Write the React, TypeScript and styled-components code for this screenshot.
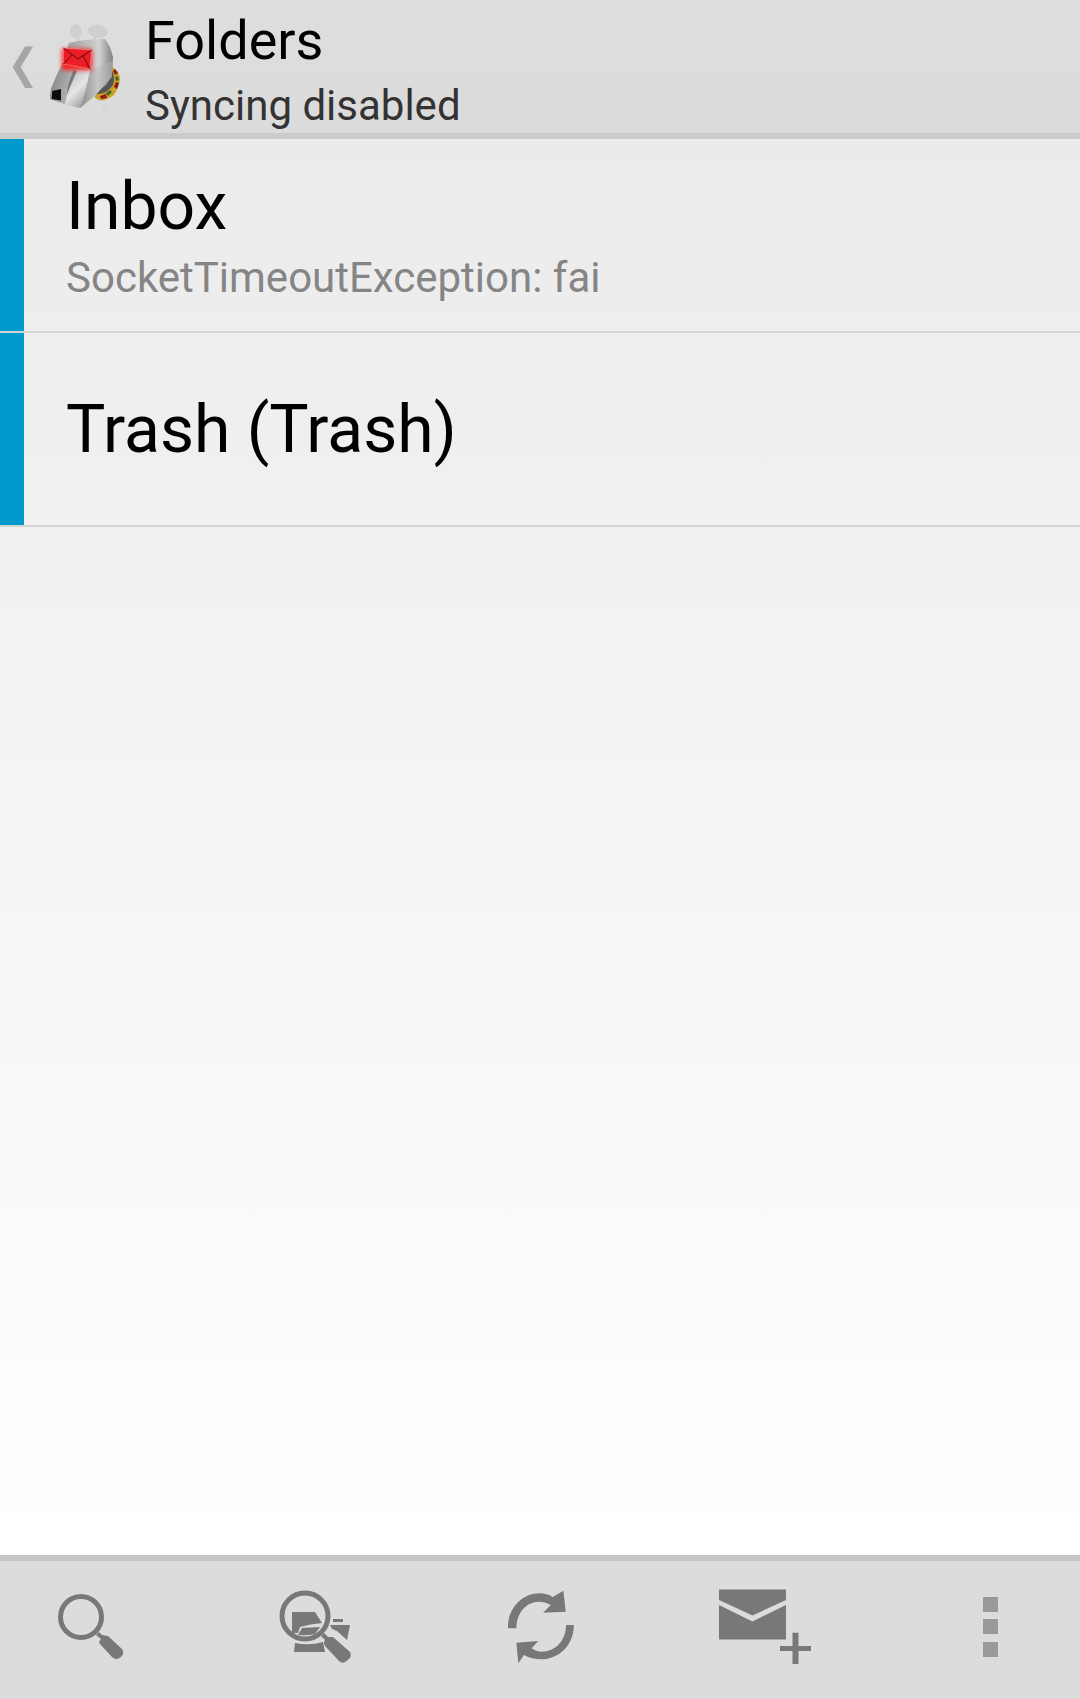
import React from 'react'
import styled, { createGlobalStyle } from 'styled-components'

const GlobalStyle = createGlobalStyle`
  html, body {
    margin: 0;
    padding: 0;
  }
  body {
    font-family: Roboto, 'Liberation Sans', sans-serif;
  }
`

const Screen = styled.div`
  width: 1080px;
  height: 1699px;
  display: flex;
  flex-direction: column;
  overflow: hidden;
`

const ActionBar = styled.header`
  height: 133px;
  flex: none;
  display: flex;
  align-items: center;
  background: linear-gradient(180deg, #dedede, #dbdbdb);
  border-bottom: 6px solid #cbcbcb;
`

const BackChevron = styled.svg`
  width: 24px;
  height: 44px;
  margin-left: 12px;
  flex: none;
`

const Logo = styled.svg`
  width: 80px;
  height: 112px;
  margin-left: 9px;
  flex: none;
`

const TitleBlock = styled.div`
  margin-left: 20px;
  padding-top: 6px;
  display: flex;
  flex-direction: column;
`

const Title = styled.div`
  font-size: 54px;
  line-height: 64px;
  color: #000;
`

const Subtitle = styled.div`
  font-size: 42px;
  line-height: 50px;
  margin-top: 8px;
  color: #333;
`

const Content = styled.main`
  flex: 1;
  min-height: 0;
  background: linear-gradient(180deg, #ebebeb, #ffffff);
`

const FolderRow = styled.div`
  height: 192px;
  display: flex;
  border-bottom: 2px solid #d4d4d4;
`

const ColorChip = styled.div<{ $color: string }>`
  width: 24px;
  flex: none;
  background: ${props => props.$color};
`

const FolderText = styled.div`
  margin-left: 42px;
  padding-top: 2px;
  display: flex;
  flex-direction: column;
  justify-content: center;
`

const FolderName = styled.div`
  font-size: 66px;
  line-height: 76px;
  color: #000;
`

const FolderStatus = styled.div`
  font-size: 42px;
  line-height: 50px;
  margin-top: 8px;
  color: #858585;
`

const BottomBar = styled.footer`
  height: 138px;
  flex: none;
  display: flex;
  background: #dcdcdc;
  border-top: 6px solid #c6c6c6;
`

const BarButton = styled.div`
  flex: 1;
  display: flex;
  align-items: center;
  justify-content: center;
`

const BarIcon = styled.svg`
  width: 100px;
  height: 100px;
  display: block;
  overflow: visible;
`

const SearchIcon = () => (
  <BarIcon viewBox="0 0 100 100">
    <circle cx="23" cy="37" r="20.5" fill="none" stroke="#787878" strokeWidth="5" />
    <path d="M38 55 L41 52 L44 55 L50 56 L64 69 Q67 73 63 77 Q58 81 54 77 L42 64 Q40 62 43 59 Z" fill="#787878" />
  </BarIcon>
)

const FolderSearchIcon = () => (
  <BarIcon viewBox="0 0 100 100">
    <path d="M18 32 H41 L48 43 Q36 44 26 47 L24 53 H18 Z" fill="#787878" />
    <path d="M28 48 L46 47 L41 54 Q33 56 24 55 Z" fill="#787878" />
    <path d="M21 63 Q36 66 49 62 L51 72 H20 Z" fill="#787878" />
    <path d="M59 39 H69 V42 H59 Z M56 45 H76 L73 60 L63 51 L58 49 Z" fill="#787878" />
    <circle cx="31" cy="36" r="23" fill="none" stroke="#787878" strokeWidth="5" />
    <path d="M47 56 L50 53 L54 57 L59 57 L76 72 Q78 76 75 79 L71 82 Q68 84 65 81 L51 66 Q49 63 51 60 Z" fill="#787878" />
  </BarIcon>
)

const SyncIcon = () => (
  <BarIcon viewBox="0 0 100 100">
    <path d="M18 48.3 C17 28 33 13.3 49.3 13.3 Q57 13.3 62.7 17 L73.4 10.7 L75.7 31.7 L53.1 32.7 L60.8 25 Q55 21.7 49.3 21.7 C36 21.7 26.4 33 26.4 48.3 Z" fill="#787878" />
    <path d="M83.8 45 C84 65 69 79.3 51.2 79.3 Q42 79.3 34 75 L28.3 83.3 L26.4 62.7 L48.2 61 L41.7 68.3 Q46 71.7 51.2 71.7 C66 71.7 76.1 60 76.1 45 Z" fill="#787878" />
  </BarIcon>
)

const ComposeIcon = () => (
  <BarIcon viewBox="0 0 100 100">
    <path d="M13 9.5 H80 V20 L46.5 35.5 L13 20 Z" fill="#787878" />
    <path d="M13 25 L46.5 41.5 L80 25 V59.5 H13 Z" fill="#787878" />
    <path d="M74 66 H105 V71 H74 Z M86.5 52.7 H92.5 V84 H86.5 Z" fill="#787878" />
  </BarIcon>
)

const OverflowIcon = () => (
  <BarIcon viewBox="0 0 100 100">
    <path d="M61 17 H76 V32 H61 Z M61 39 H76 V54 H61 Z M61 62 H76 V77 H61 Z" fill="#999" />
  </BarIcon>
)

const K9Logo = () => (
  <Logo viewBox="0 0 80 112">
    <defs>
      <linearGradient id="k9-head" x1="0" y1="0" x2="1" y2="0">
        <stop offset="0%" stopColor="#8a8a8a" />
        <stop offset="50%" stopColor="#b4b4b4" />
        <stop offset="78%" stopColor="#d2d2d2" />
        <stop offset="100%" stopColor="#808080" />
      </linearGradient>
      <linearGradient id="k9-snout" x1="0" y1="0" x2="1" y2="0.4">
        <stop offset="0%" stopColor="#7e7e7e" />
        <stop offset="100%" stopColor="#b8b8b8" />
      </linearGradient>
      <linearGradient id="k9-muzzle" x1="0" y1="0" x2="0.6" y2="1">
        <stop offset="0%" stopColor="#b0b0b0" />
        <stop offset="60%" stopColor="#e6e6e6" />
        <stop offset="100%" stopColor="#a4a4a4" />
      </linearGradient>
      <linearGradient id="k9-cheek" x1="0" y1="0" x2="1" y2="0">
        <stop offset="0%" stopColor="#8c8c8c" />
        <stop offset="55%" stopColor="#c6c6c6" />
        <stop offset="100%" stopColor="#9c9c9c" />
      </linearGradient>
      <filter id="k9-glow" x="-30%" y="-30%" width="160%" height="160%">
        <feGaussianBlur stdDeviation="2.2" />
      </filter>
    </defs>
    <path d="M33 26 L34 36 M50 25 L48 34" stroke="#c8c8c8" strokeWidth="1.6" fill="none" />
    <ellipse cx="30.7" cy="20" rx="6" ry="7" fill="#cfcfcf" />
    <ellipse cx="52.7" cy="20.5" rx="10" ry="6.5" fill="#cfcfcf" transform="rotate(10 52.7 20.5)" />
    <ellipse cx="60" cy="96" rx="3" ry="4" fill="#d8d8d8" />
    <path d="M65 54.5 Q75 60 75 68 Q74 78 68.3 84.5 Q62 89 56.7 89.5 Q51 89 49 84.5 L60 64 Z" fill="#c9a227" />
    <path d="M70 58 L73 62 L70 64 L68 60 Z M74 72 L72 78 L69 76 L71 71 Z M62 87 L56 88 L55 85 L61 83 Z" fill="#8c1c1c" />
    <path d="M73 65 L74 69 L71 70 L70 66 Z M67 81 L63 85 L61 82 L65 79 Z" fill="#3d6b2f" />
    <path d="M66 58 Q71 66 68 74 Q62 83 52 83 L44 76 L60 58 Z" fill="#565656" />
    <path d="M64 66 Q64 72 60 75 Q55 79 49 79 L46 74 L58 62 Z" fill="#8f8f8f" />
    <path d="M24 32 Q40 28 60 28 L65 36 L68 46 L66.7 66 L50 84.5 L35 97 L20 93 L5 88 L6 78 L11.7 64.5 L17.3 53 Z" fill="url(#k9-head)" />
    <path d="M45 59 L67.5 50 L66.7 66 L50 84.5 L35 97 L41 78 Z" fill="url(#k9-cheek)" />
    <path d="M17.3 53 L30 57 L24 75 L20 93 L5 88 L6 78 L11.7 64.5 Z" fill="url(#k9-snout)" />
    <path d="M30 57 L45 59 L41 78 L35 97 L20 93 L24 75 Z" fill="url(#k9-muzzle)" />
    <path d="M28.5 59 L32 60 L25 76 L22 84 L23 74 Z" fill="#7a7a7a" />
    <path d="M7.3 80 L16 78 L16 89.5 L6.7 88 Z" fill="#0c0c0c" />
    <rect x="17" y="38" width="30" height="21" fill="#ff1e1e" filter="url(#k9-glow)" />
    <path d="M18.3 37 L46.7 39 L45 58 L18.3 53 Z" fill="#ee1c25" stroke="#f2a0a0" strokeWidth="0.6" />
    <path d="M18.3 37 L33 48 L46.7 39 M18.3 53 L27 44 M45 58 L38 44.5" fill="none" stroke="#4a0a0e" strokeWidth="0.9" />
  </Logo>
)

export default function App() {
  return (
    <Screen>
      <GlobalStyle />
      <ActionBar>
        <BackChevron viewBox="0 0 24 44">
          <path d="M13 1.5 H21 L8.7 22 L21 43 H13 L0.7 22 Z" fill="#a6a6a6" />
        </BackChevron>
        <K9Logo />
        <TitleBlock>
          <Title>Folders</Title>
          <Subtitle>Syncing disabled</Subtitle>
        </TitleBlock>
      </ActionBar>
      <Content>
        <FolderRow>
          <ColorChip $color="#0099cc" />
          <FolderText>
            <FolderName>Inbox</FolderName>
            <FolderStatus>SocketTimeoutException: fai</FolderStatus>
          </FolderText>
        </FolderRow>
        <FolderRow>
          <ColorChip $color="#0099cc" />
          <FolderText>
            <FolderName>Trash (Trash)</FolderName>
          </FolderText>
        </FolderRow>
      </Content>
      <BottomBar>
        <BarButton><SearchIcon /></BarButton>
        <BarButton><FolderSearchIcon /></BarButton>
        <BarButton><SyncIcon /></BarButton>
        <BarButton><ComposeIcon /></BarButton>
        <BarButton><OverflowIcon /></BarButton>
      </BottomBar>
    </Screen>
  )
}
